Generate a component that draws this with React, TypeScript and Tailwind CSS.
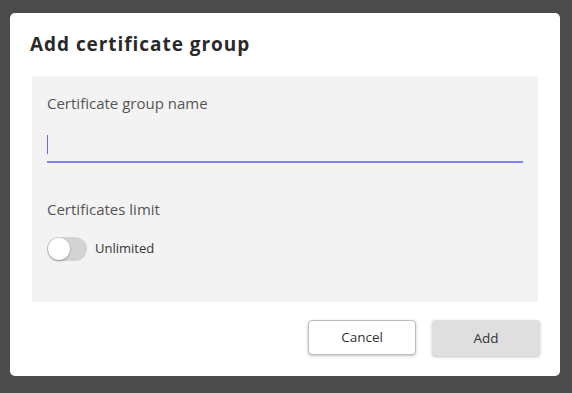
export default function App() {
  return (
    <div className="w-[572px] h-[393px] bg-[#4b4b4b] pt-[13px] pl-[10px] font-['Open_Sans','Liberation_Sans',sans-serif]">
      <div className="w-[550px] h-[363px] bg-white rounded-[5px] flex flex-col">
        <h2 className="pl-5 pt-[19px] h-[63px] text-[19px] font-bold tracking-[0.95px] text-[#2a2a2a] leading-6">
          Add certificate group
        </h2>
        <div className="ml-[22px] w-[506px] h-[226px] bg-[#f3f3f3] pt-[17px] px-[15px]">
          <label className="block text-[15px] leading-5 text-[#555]">Certificate group name</label>
          <div className="mt-[20px] h-[30px] border-b-2 border-[#8282f6] flex items-start w-[476px]">
            <span className="w-px h-[19px] bg-[#6a6ae8] mt-[2px]"></span>
          </div>
          <label className="block mt-[36px] text-[15px] leading-5 text-[#555]">Certificates limit</label>
          <div className="mt-[18px] flex items-center gap-2">
            <div className="w-10 h-6 rounded-full bg-[#d3d3d3] flex items-center px-px">
              <span className="w-[22px] h-[22px] rounded-full bg-white shadow-[0_1px_2px_rgba(0,0,0,0.35)]"></span>
            </div>
            <span className="text-[13px] text-[#333]">Unlimited</span>
          </div>
        </div>
        <div className="flex justify-end gap-4 pr-5 pt-[18px]">
          <button className="w-[108px] h-[35px] rounded bg-white border border-[#bdbdbd] shadow-[0_1px_3px_rgba(0,0,0,0.25)] text-[13.5px] text-[#333]">
            Cancel
          </button>
          <button className="w-[108px] h-[36px] rounded bg-[#dfdfdf] shadow-[0_1px_3px_rgba(0,0,0,0.25)] text-[13.5px] text-[#333]">
            Add
          </button>
        </div>
      </div>
    </div>
  );
}
